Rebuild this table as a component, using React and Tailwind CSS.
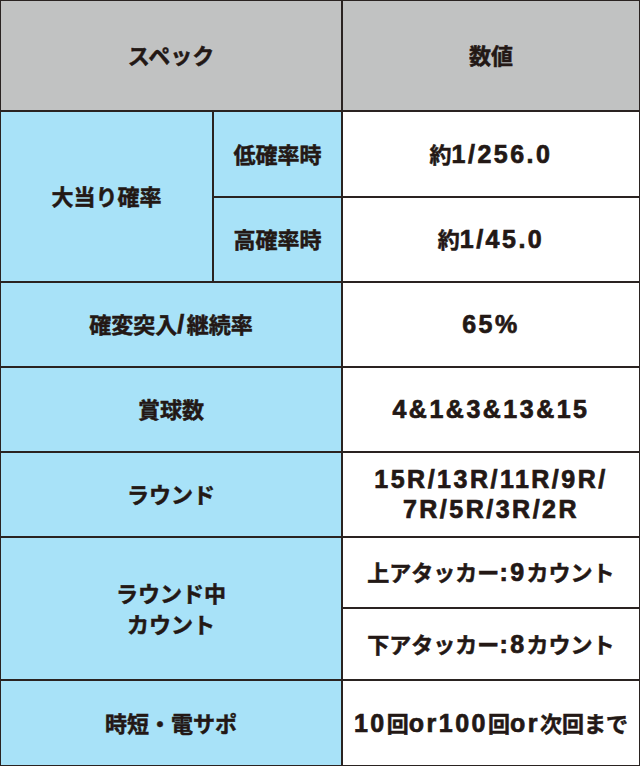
import React from "react";

function T({ s }) {
  const parts = s.match(/[\x20-\x7E]+|[^\x20-\x7E]+/g) || [];
  return parts.map((p, i) =>
    /[\x20-\x7E]/.test(p[0]) ? (
      <span
        key={i}
        className="font-['Liberation_Sans','Noto_Sans_CJK_JP',sans-serif] text-[25px] tracking-[2.5px] [-webkit-text-stroke:0.7px_#231815]"
      >
        {p}
      </span>
    ) : (
      <span key={i} className="text-[22px] [-webkit-text-stroke:0.5px_#231815]">
        {p}
      </span>
    )
  );
}

function Cell({ kind, className = "", children }) {
  const bg =
    kind === "head" ? "bg-[#c1c2c2]" : kind === "label" ? "bg-[#a8e2f8]" : "bg-white";
  return (
    <div
      className={`${bg} flex items-center justify-center text-center leading-[28px] ${className}`}
    >
      <div>{children}</div>
    </div>
  );
}

export default function App() {
  return (
    <div className="w-[640px] h-[766px] bg-[#2a2321] p-px grid grid-cols-[211px_127px_296px] grid-rows-[109px_84px_83px_83px_83px_83px_69px_70px_84px] gap-[2px] font-['Noto_Sans_CJK_JP',sans-serif] font-bold text-[#231815]">
      <Cell kind="head" className="col-span-2">
        <T s="スペック" />
      </Cell>
      <Cell kind="head">
        <T s="数値" />
      </Cell>

      <Cell kind="label" className="row-span-2">
        <T s="大当り確率" />
      </Cell>
      <Cell kind="label">
        <T s="低確率時" />
      </Cell>
      <Cell kind="value">
        <T s="約1/256.0" />
      </Cell>
      <Cell kind="label">
        <T s="高確率時" />
      </Cell>
      <Cell kind="value">
        <T s="約1/45.0" />
      </Cell>

      <Cell kind="label" className="col-span-2">
        <T s="確変突入/継続率" />
      </Cell>
      <Cell kind="value">
        <T s="65%" />
      </Cell>

      <Cell kind="label" className="col-span-2">
        <T s="賞球数" />
      </Cell>
      <Cell kind="value">
        <T s="4&1&3&13&15" />
      </Cell>

      <Cell kind="label" className="col-span-2">
        <T s="ラウンド" />
      </Cell>
      <Cell kind="value">
        <T s="15R/13R/11R/9R/" />
        <br />
        <T s="7R/5R/3R/2R" />
      </Cell>

      <Cell kind="label" className="col-span-2 row-span-2">
        <T s="ラウンド中" />
        <br />
        <T s="カウント" />
      </Cell>
      <Cell kind="value">
        <T s="上アタッカー:9カウント" />
      </Cell>
      <Cell kind="value">
        <T s="下アタッカー:8カウント" />
      </Cell>

      <Cell kind="label" className="col-span-2">
        <T s="時短・電サポ" />
      </Cell>
      <Cell kind="value">
        <T s="10回or100回or次回まで" />
      </Cell>
    </div>
  );
}
